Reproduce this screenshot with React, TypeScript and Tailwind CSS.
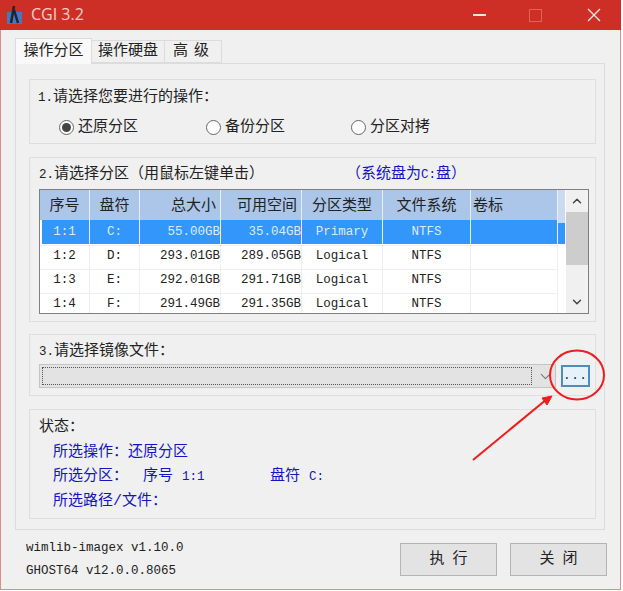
import React from 'react';
import { ChevronDown, ChevronUp } from 'lucide-react';

const rows = [
  { no: '1:1', drive: 'C:', total: '55.00GB', free: '35.04GB', type: 'Primary', fs: 'NTFS', active: true },
  { no: '1:2', drive: 'D:', total: '293.01GB', free: '289.05GB', type: 'Logical', fs: 'NTFS', active: false },
  { no: '1:3', drive: 'E:', total: '292.01GB', free: '291.71GB', type: 'Logical', fs: 'NTFS', active: false },
  { no: '1:4', drive: 'F:', total: '291.49GB', free: '291.35GB', type: 'Logical', fs: 'NTFS', active: false },
];

const Radio = ({ label, checked, className }: { label: string; checked?: boolean; className: string }) => (
  <div className={`flex items-center gap-[4px] ${className}`}>
    <span className="flex h-[15px] w-[15px] items-center justify-center rounded-full border border-[#666] bg-white">
      {checked && <span className="h-[9px] w-[9px] rounded-full bg-[#444]" />}
    </span>
    <span className="text-[15px] leading-none text-[#222]">{label}</span>
  </div>
);

const App: React.FC = () => {
  return (
    <div className="relative h-[591px] w-[623px] overflow-hidden bg-white font-['Liberation_Mono','Noto_Sans_CJK_SC',monospace] text-[#222]">
      <div className="flex h-[590px] w-[621px] flex-col border-x border-b border-[#dc8f8a] bg-[#f0f0f0]">
        {/* Title bar */}
        <div className="-mx-px flex h-[30px] shrink-0 items-center bg-[#cd2f27] pl-[7px]">
          <svg width="16" height="19" viewBox="0 0 16 19" className="mr-[8px]">
            <rect x="0" y="6" width="15" height="12" fill="#4a77b8" />
            <path d="M7 0 L4 17 M7 4 L11 17" stroke="#1d2436" strokeWidth="2.5" fill="none" />
          </svg>
          <span className="-mt-[2px] font-['Open_Sans',sans-serif] text-[16px] leading-none text-[#f6cfcb]">CGI 3.2</span>
          <div className="ml-[389px] h-[2px] w-[13px] bg-[#f8e4e2]" />
          <div className="ml-[43px] h-[13px] w-[13px] border border-[#e2625b]" />
          <svg width="14" height="14" viewBox="0 0 14 14" className="ml-[45px]">
            <path d="M1 1 L13 13 M13 1 L1 13" stroke="#f8e4e2" strokeWidth="1.4" />
          </svg>
        </div>

        {/* Tabs */}
        <div className="mt-[8px] flex h-[25px] items-end pl-[14px] text-[15px] leading-none">
          <div className="z-10 -mb-px flex h-[26px] w-[77px] items-center justify-center border border-b-0 border-[#dcdcdc] bg-[#f9f9f9]">操作分区</div>
          <div className="flex h-[23px] w-[73px] items-center justify-center border-y border-r border-[#dcdcdc] bg-[#f0f0f0]">操作硬盘</div>
          <div className="flex h-[23px] w-[57px] items-center justify-center gap-[6px] border-y border-r border-[#dcdcdc] bg-[#f0f0f0] pr-[4px]">
            <span>高</span>
            <span>级</span>
          </div>
        </div>

        {/* Tab panel */}
        <div className="ml-[14px] flex h-[467px] w-[590px] flex-col border border-[#dcdcdc] px-[13px] pt-[15px]">
          <section className="h-[65px] w-[567px] shrink-0 border border-[#dedede] pl-[8px] pt-[9px]">
            <p className="text-[15px] leading-[17px]">
              <span className="text-[12.5px]">1.</span>请选择您要进行的操作：
            </p>
            <div className="mt-[13px] flex items-center">
              <Radio label="还原分区" checked className="ml-[21px]" />
              <Radio label="备份分区" className="ml-[68px]" />
              <Radio label="分区对拷" className="ml-[66px]" />
            </div>
          </section>

          <section className="mt-[13px] h-[165px] w-[567px] shrink-0 border border-[#dedede] pl-[9px] pt-[8px]">
            <div className="flex h-[17px] items-center text-[15px] leading-[17px]">
              <span>
                <span className="text-[12.5px]">2.</span>请选择分区（用鼠标左键单击）
              </span>
              <span className="ml-[82px] whitespace-nowrap text-[#1414c4]">
                （系统盘为<span className="text-[12.5px]">C:</span>盘）
              </span>
            </div>

            <div className="mt-[6px] flex h-[125px] w-[550px] border border-[#7f7f7f] bg-white">
              <div className="w-[525px] shrink-0 overflow-hidden">
                <div className="grid h-[30px] grid-cols-[50px_50px_81px_81px_81px_88px_87px_7px] bg-[#abc6e9] text-[15px] leading-[33px]">
                  <div className="border-r border-[#e6eef9] text-center">序号</div>
                  <div className="border-r border-[#e6eef9] text-center">盘符</div>
                  <div className="border-r border-[#e6eef9] pr-[4px] text-right">总大小</div>
                  <div className="border-r border-[#e6eef9] pr-[4px] text-right">可用空间</div>
                  <div className="border-r border-[#e6eef9] text-center">分区类型</div>
                  <div className="border-r border-[#e6eef9] text-center">文件系统</div>
                  <div className="border-r border-[#e6eef9] pl-[2px]">卷标</div>
                  <div className="bg-[#c9daf1]" />
                </div>
                {rows.map((row) => (
                  <div
                    key={row.no}
                    className={`grid h-[24px] grid-cols-[50px_50px_81px_81px_81px_88px_87px] text-[12.5px] leading-[25px] ${
                      row.active ? 'bg-[#3296fb] text-[#dcedff] [box-shadow:inset_2px_0_0_#fff]' : 'text-[#222]'
                    }`}
                  >
                    <div className="border-r border-b border-[#eeeeee] text-center">{row.no}</div>
                    <div className="border-r border-b border-[#eeeeee] text-center">{row.drive}</div>
                    <div className="border-r border-b border-[#eeeeee] text-right">{row.total}</div>
                    <div className="border-r border-b border-[#eeeeee] text-right">{row.free}</div>
                    <div className="border-r border-b border-[#eeeeee] text-center">{row.type}</div>
                    <div className="border-r border-b border-[#eeeeee] text-center">{row.fs}</div>
                    <div className="border-r border-b border-[#eeeeee]" />
                  </div>
                ))}
              </div>
              {/* Scrollbar */}
              <div className="ml-[1px] flex w-[22px] flex-col items-center bg-[#f0f0f0]">
                <div className="flex h-[22px] items-center justify-center">
                  <ChevronUp className="h-[14px] w-[14px] text-[#444]" strokeWidth={2.5} />
                </div>
                <div className="h-[53px] w-full bg-[#cdcdcd]" />
                <div className="flex-1" />
                <div className="flex h-[22px] items-center justify-center">
                  <ChevronDown className="h-[14px] w-[14px] text-[#444]" strokeWidth={2.5} />
                </div>
              </div>
            </div>
          </section>

          <section className="mt-[12px] h-[62px] w-[567px] shrink-0 border border-[#dedede] pl-[9px] pt-[8px]">
            <p className="text-[15px] leading-[17px]">
              <span className="text-[12.5px]">3.</span>请选择镜像文件：
            </p>
            <div className="mt-[3px] flex items-center">
              <div className="flex h-[24px] w-[517px] items-center border border-[#c4c4c4] bg-[#e3e3e3] pl-[2px]">
                <div className="h-[18px] w-[490px] border border-dotted border-[#555]" />
                <ChevronDown className="ml-[5px] h-[17px] w-[17px] text-[#777]" strokeWidth={1.5} />
              </div>
              <div className="ml-[5px] flex h-[22px] w-[29px] items-end justify-center border-2 border-[#4f8db8] bg-[#e5f1fb] pb-[3px] text-[12px] leading-none tracking-[1px]">
                ...
              </div>
            </div>
          </section>

          <section className="mt-[13px] h-[110px] w-[567px] shrink-0 border border-[#dedede] pl-[9px] pt-[9px]">
            <p className="text-[15px] leading-[17px]">状态：</p>
            <div className="ml-[14px] mt-[8px] flex flex-col gap-[7px] text-[15px] leading-[17px] text-[#1414c4]">
              <p>所选操作：还原分区</p>
              <div className="flex">
                <span className="w-[90px]">所选分区：</span>
                <span className="w-[127px]">
                  序号 <span className="text-[12.5px]">1:1</span>
                </span>
                <span>
                  盘符 <span className="text-[12.5px]">C:</span>
                </span>
              </div>
              <p>所选路径/文件：</p>
            </div>
          </section>
        </div>

        {/* Footer */}
        <div className="flex flex-1 items-start justify-between pl-[25px] pr-[13px]">
          <div className="mt-[10px] flex flex-col gap-[6px] text-[12.5px] leading-[17px]">
            <p>wimlib-imagex v1.10.0</p>
            <p>GHOST64 v12.0.0.8065</p>
          </div>
          <div className="mt-[13px] flex gap-[13px] text-[15px] leading-none">
            <button className="flex h-[33px] w-[97px] items-center justify-center gap-[8px] border border-[#b4b4b4] bg-[#e3e3e3]">
              <span>执</span>
              <span>行</span>
            </button>
            <button className="flex h-[33px] w-[97px] items-center justify-center gap-[8px] border border-[#b4b4b4] bg-[#e3e3e3]">
              <span>关</span>
              <span>闭</span>
            </button>
          </div>
        </div>
      </div>

      {/* Red annotation drawn over the screenshot */}
      <svg width="623" height="591" viewBox="0 0 623 591" className="pointer-events-none absolute left-0 top-0">
        <ellipse cx="577" cy="375" rx="27" ry="24.5" fill="none" stroke="#ee1c1c" strokeWidth="2" />
        <path d="M473 460 L547 399" stroke="#ee1c1c" strokeWidth="2" fill="none" />
        <path d="M552 396 L542 398 L547 405 Z" fill="#ee1c1c" stroke="#ee1c1c" strokeWidth="1" />
      </svg>
    </div>
  );
};

export default App;
